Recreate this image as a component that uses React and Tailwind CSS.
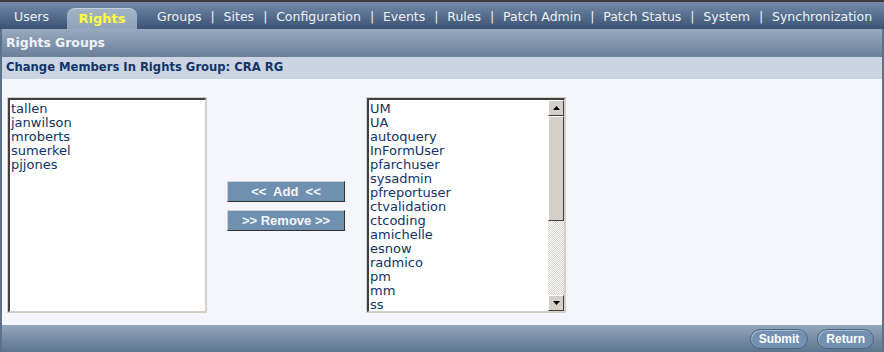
const navItems = ['Groups', 'Sites', 'Configuration', 'Events', 'Rules', 'Patch Admin', 'Patch Status', 'System', 'Synchronization'];

const members = ['tallen', 'janwilson', 'mroberts', 'sumerkel', 'pjjones'];

const available = ['UM', 'UA', 'autoquery', 'InFormUser', 'pfarchuser', 'sysadmin', 'pfreportuser', 'ctvalidation', 'ctcoding', 'amichelle', 'esnow', 'radmico', 'pm', 'mm', 'ss'];

function ScrollButton({ up }) {
  return (
    <div className="h-[16px] w-[16px] bg-[#d4d0c8] border border-t-white border-l-white border-r-[#404040] border-b-[#404040] flex items-center justify-center">
      <svg width="7" height="4" viewBox="0 0 7 4">
        {up ? <path d="M3.5 0L7 4H0z" fill="#000" /> : <path d="M0 0h7L3.5 4z" fill="#000" />}
      </svg>
    </div>
  );
}

function ListBox({ items, scroll }) {
  return (
    <div className="w-[200px] h-[216px] border border-[#d4d0c8] flex">
      <div className="flex-1 flex border-t-2 border-l-2 border-[#404040] border-b border-r border-b-[#d4d0c8] border-r-[#d4d0c8] bg-white overflow-hidden">
        <div className="flex-1 pl-[1px] pt-[2px] text-[13px] leading-[14px] text-[#0d3466]">
          {items.map((it) => (
            <div key={it}>{it}</div>
          ))}
        </div>
        {scroll && (
          <div className="w-[16px] flex flex-col bg-[repeating-conic-gradient(#d4d0c8_0_25%,#ffffff_0_50%)] bg-[length:2px_2px]">
            <ScrollButton up />
            <div className="h-[105px] bg-[#d4d0c8] border border-t-white border-l-white border-r-[#404040] border-b-[#404040]" />
            <div className="flex-1" />
            <ScrollButton />
          </div>
        )}
      </div>
    </div>
  );
}

function MoveButton({ children }) {
  return (
    <button className="w-[118px] h-[21px] bg-[#7090b0] border border-t-[#c8d0d8] border-l-[#c8d0d8] border-r-[#303030] border-b-[#303030] text-[#f4f6fa] font-bold text-[13px] font-['Liberation_Sans',sans-serif] whitespace-pre">
      {children}
    </button>
  );
}

function PillButton({ children }) {
  return (
    <button className="h-[20px] px-[8px] rounded-full bg-[#7190b2] border border-[#4d6784] shadow-[inset_1px_1px_0_#a6bad0] text-white font-bold text-[12px] font-['Liberation_Sans',sans-serif]">
      {children}
    </button>
  );
}

export default function App() {
  return (
    <div className="w-[884px] h-[352px] overflow-hidden flex flex-col bg-[#f5f6fd] font-['DejaVu_Sans',sans-serif]">
      {/* top navigation */}
      <div className="h-[29px] shrink-0 border-t-2 border-[#3b3b3b] bg-gradient-to-b from-[#748ca9] to-[#3b5373] flex items-end text-[12.5px] text-[#eef1f6]">
        <div className="h-full flex items-center pl-[14px] pt-[4px] pr-[18px]">Users</div>
        <div className="h-[21px] w-[70px] rounded-t-[8px] bg-gradient-to-b from-[#a4b4c6] to-[#8fa3b9] border-t border-[#c3cfdc] flex items-center justify-center text-[13px] font-bold text-[#ffff3c]">
          Rights
        </div>
        <div className="h-full flex items-center pl-[20px] pt-[4px] gap-[9px]">
          {navItems.map((n, i) => (
            <div key={n} className="flex items-center gap-[8.8px]">
              {i > 0 && <span>|</span>}
              <span>{n}</span>
            </div>
          ))}
        </div>
      </div>

      <div className="flex-1 flex flex-col border-x-2 border-[#5c7289]">
        {/* page header */}
        <div className="h-[28px] shrink-0 bg-gradient-to-b from-[#98aabe] to-[#6a8099] flex items-center pl-[4px] text-[12.4px] font-bold text-[#eef1f5]">
          Rights Groups
        </div>
        <div className="h-[22px] shrink-0 bg-[#ccd4e4] flex items-center pl-[4px] text-[11.6px] font-bold text-[#10346a]">
          Change Members In Rights Group: CRA RG
        </div>

        {/* body */}
        <div className="flex-1 pt-[18px] pl-[5px]">
          <div className="flex items-center">
            <ListBox items={members} />
            <div className="flex flex-col gap-[8px] ml-[20px] mr-[21px] pt-[1px]">
              <MoveButton>{'<<  Add  <<'}</MoveButton>
              <MoveButton>{'>> Remove >>'}</MoveButton>
            </div>
            <ListBox items={available} scroll />
          </div>
        </div>

        {/* footer */}
        <div className="h-[27px] shrink-0 bg-gradient-to-b from-[#93a6bb] to-[#5d758f] flex items-center justify-end gap-[9px] pr-[8px]">
          <PillButton>Submit</PillButton>
          <PillButton>Return</PillButton>
        </div>
      </div>
    </div>
  );
}
